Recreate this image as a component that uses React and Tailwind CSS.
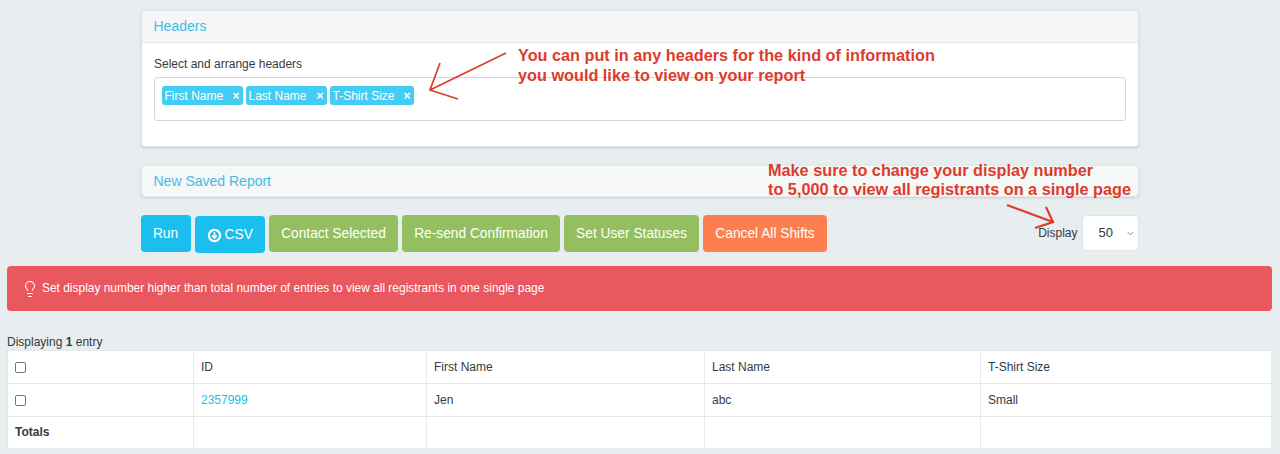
import { ChevronDown, Lightbulb } from 'lucide-react'

function Tag({ label, width }) {
  return (
    <span className={`flex h-[19px] items-center justify-between rounded-[3px] bg-[#43cdf5] pl-[3px] pr-[3px] text-[12px] text-white ${width}`}>
      {label}
      <span className="text-[12px] font-bold leading-none">×</span>
    </span>
  )
}

function Button({ className, children }) {
  return (
    <button className={`flex h-[37px] items-center justify-center whitespace-nowrap rounded-[4px] pt-[2px] text-[13.75px] text-white ${className}`}>
      {children}
    </button>
  )
}

function Cell({ className = '', children }) {
  return <td className={`border border-[#e4e8ea] px-[7px] pb-[1px] align-middle ${className}`}>{children}</td>
}

function Check() {
  return <span className="mt-[1px] block h-[11px] w-[11px] rounded-[2px] border border-[#767676] bg-white" />
}

export default function App() {
  return (
    <div className="relative h-[454px] overflow-hidden bg-[#e8edf0] font-['Liberation_Sans',sans-serif] text-[12px] text-[#333b3f]">
      <div className="ml-[140.5px] w-[998px] pt-[10px]">
        <section className="h-[137px] rounded-[4px] border border-[#e0e3e5] bg-white shadow-sm">
          <h2 className="flex h-[32px] items-center rounded-t-[4px] border-b border-[#e2e4e5] bg-[#f5f6f6] px-[12px] text-[14px] text-[#43bde6]">Headers</h2>
          <div className="px-[12px] pt-[14px]">
            <p className="pl-[0.5px] leading-[14px]">Select and arrange headers</p>
            <div className="mt-[6px] flex h-[44px] gap-[3px] rounded-[3px] border border-[#d5d9db] px-[7px] pt-[8px]">
              <Tag label="First Name" width="w-[81px]" />
              <Tag label="Last Name" width="w-[81px]" />
              <Tag label="T-Shirt Size" width="w-[84px]" />
            </div>
          </div>
        </section>

        <section className="mt-[18px] flex h-[32px] items-center rounded-[4px] border border-[#e6e8e9] bg-[#f6f7f7] px-[12px] text-[14px] text-[#43bde6] shadow-sm">
          New Saved Report
        </section>

        <div className="mt-[18px] flex items-start">
          <div className="flex items-start gap-[4px]">
            <Button className="w-[50px] bg-[#1abfee]">Run</Button>
            <Button className="mt-[1px] w-[70.5px] gap-[3px] bg-[#1abfee]">
              <svg width="15" height="15" viewBox="0 0 16 16" aria-hidden="true">
                <circle cx="8" cy="8" r="6" fill="none" stroke="#fff" strokeWidth="2.4" />
                <path d="M8 4.5v6M5.5 8 8 10.8 10.5 8" fill="none" stroke="#fff" strokeWidth="1.7" />
              </svg>
              CSV
            </Button>
            <Button className="w-[129px] bg-[#93bf60]">Contact Selected</Button>
            <Button className="w-[158px] bg-[#93bf60]">Re-send Confirmation</Button>
            <Button className="w-[135px] bg-[#93bf60]">Set User Statuses</Button>
            <Button className="w-[124px] bg-[#fd7f4f]">Cancel All Shifts</Button>
          </div>
          <div className="ml-auto flex items-center gap-[4px]">
            <span>Display</span>
            <div className="flex h-[36px] w-[57px] items-center justify-between rounded-[4px] border border-[#dfe3e5] bg-white pl-[16px] pr-[2px] text-[13px]">
              50
              <ChevronDown size={11} strokeWidth={1.5} className="text-[#555f66]" />
            </div>
          </div>
        </div>
      </div>

      <div className="mx-[7px] mt-[13px] flex h-[45px] w-[1265px] items-center gap-[3px] rounded-[4px] bg-[#e9575f] pl-[14px] text-[11.95px] text-white">
        <Lightbulb size={18} strokeWidth={1.4} />
        <span className="pt-[1px]">Set display number higher than total number of entries to view all registrants in one single page</span>
      </div>

      <p className="mx-[7px] mt-[24px] leading-[14px]">Displaying <b>1</b> entry</p>
      <table className="mx-[7px] mt-[1px] w-[1264px] table-fixed border-collapse bg-white text-[12px]">
        <colgroup>
          <col className="w-[186px]" />
          <col className="w-[233px]" />
          <col className="w-[278px]" />
          <col className="w-[276px]" />
          <col className="w-[291px]" />
        </colgroup>
        <tbody>
          <tr className="h-[33px]">
            <Cell><Check /></Cell>
            <Cell>ID</Cell>
            <Cell>First Name</Cell>
            <Cell>Last Name</Cell>
            <Cell>T-Shirt Size</Cell>
          </tr>
          <tr className="h-[33px]">
            <Cell><Check /></Cell>
            <Cell className="text-[#1abfe6]">2357999</Cell>
            <Cell>Jen</Cell>
            <Cell>abc</Cell>
            <Cell>Small</Cell>
          </tr>
          <tr className="h-[32px]">
            <Cell className="font-bold">Totals</Cell>
            <Cell />
            <Cell />
            <Cell />
            <Cell />
          </tr>
        </tbody>
      </table>

      {/* annotations pasted on top of the screenshot */}
      <p className="absolute left-[518px] top-[46px] whitespace-nowrap text-[16.25px] font-bold leading-[19.5px] text-[#db3c2c]">
        You can put in any headers for the kind of information<br />you would like to view on your report
      </p>
      <p className="absolute left-[768px] top-[161px] whitespace-nowrap text-[16.25px] font-bold leading-[19px] text-[#db3c2c]">
        Make sure to change your display number<br />to 5,000 to view all registrants on a single page
      </p>
      <svg className="absolute left-0 top-0" width="1280" height="454" fill="none" stroke="#db3c2c" aria-hidden="true">
        <path strokeWidth="1.7" d="M506 53 430 90M440 63 430 90 458 99" />
        <path strokeWidth="2.2" d="M1007 205 1053 222M1046 207 1053 222 1035 228" />
      </svg>
    </div>
  )
}
